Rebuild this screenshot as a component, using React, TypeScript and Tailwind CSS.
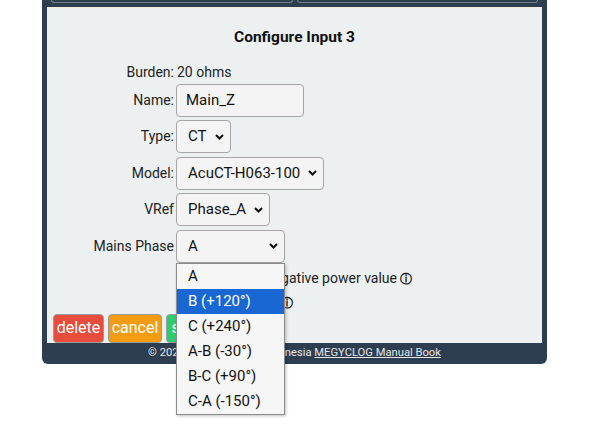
type Option = {
  label: string
}

const phaseOptions: Option[] = [
  { label: "A" },
  { label: "B (+120°)" },
  { label: "C (+240°)" },
  { label: "A-B (-30°)" },
  { label: "B-C (+90°)" },
  { label: "C-A (-150°)" },
]

function Chevron() {
  return (
    <svg width="9" height="6" viewBox="0 0 9 6" className="shrink-0">
      <path d="M1 1l3.5 3.5L8 1" fill="none" stroke="#111" strokeWidth="2" />
    </svg>
  )
}

function FakeSelect({ value, width }: { value: string; width: string }) {
  return (
    <div
      className={`${width} h-[33px] flex items-center justify-between pl-[11px] pr-[6px] bg-[#f4f4f4] border border-[#a5a5a5] rounded-[4px] text-[15px] text-[#111]`}
    >
      <span>{value}</span>
      <Chevron />
    </div>
  )
}

function Row({ label, children }: { label: string; children: React.ReactNode }) {
  return (
    <>
      <div className="flex items-center justify-end text-[14px] text-[#222]">
        {label}
      </div>
      <div className="flex items-center">{children}</div>
    </>
  )
}

function Info() {
  return <span className="text-[12px] font-bold text-[#111]">ⓘ</span>
}

export default function App() {
  return (
    <div className="min-h-screen bg-white font-['Roboto',sans-serif]">
      <div className="ml-[42px] w-[505px] bg-[#2c3e50] rounded-b-[6px] px-[5px]">
        {/* tab buttons, mostly scrolled off */}
        <div className="flex gap-[4px] px-[4px] h-[7px]">
          <div className="flex-1 h-[3px] border border-t-0 border-[#6f7f90] rounded-b-[4px]" />
          <div className="flex-1 h-[3px] border border-t-0 border-[#6f7f90] rounded-b-[4px]" />
        </div>

        <div className="bg-[#ecf0f1] h-[336px] border-t border-[#f3ecdc] pt-[20px]">
          <h2 className="text-center text-[15.5px] leading-[19px] font-bold text-[#111]">
            Configure Input 3
          </h2>

          <div className="mt-[17px] grid grid-cols-[127px_1fr] gap-x-[2px] gap-y-[3.5px]">
            <div className="text-right text-[14px] leading-[16px] text-[#222]">Burden:</div>
            <div className="text-[14px] leading-[16px] text-[#222] pl-[1px]">20 ohms</div>

            <Row label="Name:">
              <div className="w-[128px] h-[33px] flex items-center pl-[9px] bg-[#f4f4f4] border border-[#a5a5a5] rounded-[4px] text-[15px] text-[#111]">
                Main_Z
              </div>
            </Row>
            <Row label="Type:">
              <FakeSelect value="CT" width="w-[55px]" />
            </Row>
            <Row label="Model:">
              <FakeSelect value="AcuCT-H063-100" width="w-[148px]" />
            </Row>
            <Row label="VRef">
              <FakeSelect value="Phase_A" width="w-[94px]" />
            </Row>
            <Row label="Mains Phase">
              <div className="relative">
                <FakeSelect value="A" width="w-[109px]" />
                <div className="absolute left-0 top-[33px] z-10 w-[109px] bg-[#f6f6f6] border border-[#8c8c8c] shadow-[1px_1px_3px_rgba(0,0,0,0.25)]">
                  {phaseOptions.map((o, i) => (
                    <div
                      key={o.label}
                      className={
                        i === 1
                          ? "h-[25px] flex items-center pl-[11px] text-[15px] bg-[#1967d2] text-white"
                          : "h-[25px] flex items-center pl-[11px] text-[15px] text-[#111]"
                      }
                    >
                      {o.label}
                    </div>
                  ))}
                </div>
              </div>
            </Row>
          </div>

          <div className="mt-[6px] pl-[164px] text-[14px] leading-[18px] text-[#222]">
            <div className="flex items-center gap-[4px]">
              <input type="checkbox" className="w-[13px] h-[13px]" readOnly />
              <span>
                Allow negative power value <Info />
              </span>
            </div>
            <div className="mt-[5px] flex items-center gap-[4px]">
              <input type="checkbox" className="w-[13px] h-[13px]" readOnly />
              <span>
                Reverse <Info />
              </span>
            </div>
          </div>

          <div className="mt-[2px] pl-[6px] flex gap-[4px]">
            <button className="w-[51px] h-[29px] bg-[#e74c3c] text-white text-[16px] border border-[#9a9a9a] rounded-[4px]">
              delete
            </button>
            <button className="w-[54px] h-[29px] bg-[#f39c12] text-white text-[16px] border border-[#9a9a9a] rounded-[4px]">
              cancel
            </button>
            <button className="w-[44px] h-[29px] bg-[#2ecc71] text-white text-[16px] border border-[#9a9a9a] rounded-[4px]">
              save
            </button>
          </div>
        </div>

        <div className="h-[21px] flex items-center justify-center text-[11.2px] text-[#e6e6e6]">
          <span>
            © 2024 - PT. Megyclog Indonesia{" "}
            <a className="underline">MEGYCLOG Manual Book</a>
          </span>
        </div>
      </div>
    </div>
  )
}
